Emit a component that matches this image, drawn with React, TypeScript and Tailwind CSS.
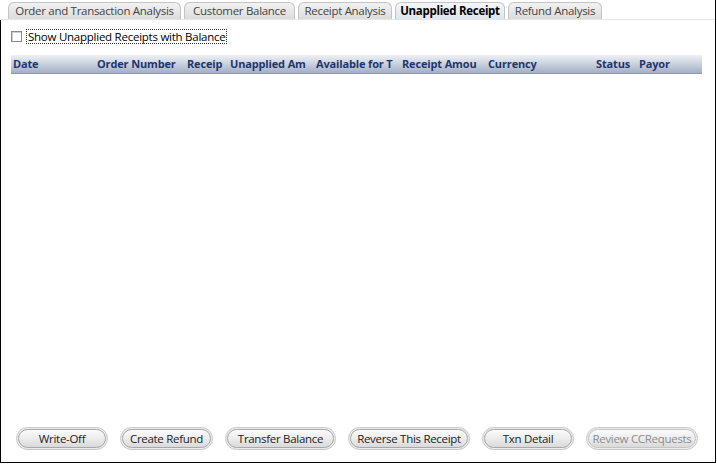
import React from "react";

const tabs = [
  { label: "Order and Transaction Analysis", w: 173, active: false },
  { label: "Customer Balance", w: 111, active: false },
  { label: "Receipt Analysis", w: 94, active: false },
  { label: "Unapplied Receipt", w: 110, active: true },
  { label: "Refund Analysis", w: 94, active: false },
];

const cols = [
  { label: "Date", w: 84 },
  { label: "Order Number", w: 90 },
  { label: "Receip", w: 43 },
  { label: "Unapplied Am", w: 86 },
  { label: "Available for T", w: 86 },
  { label: "Receipt Amou", w: 86 },
  { label: "Currency", w: 108 },
  { label: "Status", w: 43 },
  { label: "Payor", w: 50 },
];

const buttons = [
  { label: "Write-Off", w: 92, disabled: false },
  { label: "Create Refund", w: 93, disabled: false },
  { label: "Transfer Balance", w: 111, disabled: false },
  { label: "Reverse This Receipt", w: 122, disabled: false },
  { label: "Txn Detail", w: 92, disabled: false },
  { label: "Review CCRequests", w: 112, disabled: true },
];

export default function App() {
  return (
    <div
      className="w-[717px] h-[464px] bg-white"
      style={{ fontFamily: "'Open Sans', 'DejaVu Sans', sans-serif" }}
    >
      <div className="w-[716px] h-[463px] border-r border-b border-black flex flex-col">
        <div className="h-[20px] flex items-end pl-[8px] gap-[3px] border-b border-[#e6e6e6]">
          {tabs.map((t) => (
            <div
              key={t.label}
              style={{ width: t.w }}
              className={
                "h-[17px] rounded-t-[6px] border border-b-0 border-[#c4c4c4] flex items-center justify-center text-[11.5px] leading-none tracking-[-0.3px] " +
                (t.active
                  ? "bg-gradient-to-b from-[#f4f7fa] to-[#dde5ee] font-bold text-black"
                  : "bg-gradient-to-b from-[#f2f2f2] to-[#dcdcdc] text-[#444]")
              }
            >
              {t.label}
            </div>
          ))}
        </div>
        <div className="flex-1 border-l border-black flex flex-col">
          <div className="flex items-center mt-[10px] ml-[10px] h-[12px]">
            <div className="w-[11px] h-[11px] border border-[#8a8a8a] bg-white shadow-[inset_1px_1px_0_#d0d0d0]" />
            <span className="ml-[5px] text-[11.5px] leading-[13px] text-black outline-1 outline-dotted outline-[#333] tracking-[-0.25px] px-[1px]">
              Show Unapplied Receipts with Balance
            </span>
          </div>
          <div className="mt-[13px] ml-[10px] w-[691px] h-[19px] flex items-stretch bg-gradient-to-b from-[#eef1f5] via-[#c9d1de] to-[#a3afc3] border-b border-[#8d9ab0]">
            {cols.map((c) => (
              <div
                key={c.label}
                style={{ width: c.w }}
                className="pl-[2px] text-[11px] font-bold text-[#1d3670] whitespace-nowrap overflow-hidden leading-[17px] tracking-[-0.15px]"
              >
                {c.label}
              </div>
            ))}
          </div>
          <div className="flex-1" />
          <div className="flex items-center gap-[12px] ml-[15px] mb-[12px]">
            {buttons.map((b) => (
              <div
                key={b.label}
                style={{ width: b.w }}
                className="h-[23px] rounded-full border border-[#c9c9c9] p-[1px] bg-[#ececec]"
              >
                <div
                  className={
                    "h-full rounded-full border border-[#a8a8a8] bg-gradient-to-b from-[#fbfbfb] via-[#ececec] to-[#dadada] flex items-center justify-center text-[11.5px] leading-none tracking-[-0.3px] " +
                    (b.disabled ? "text-[#8c8c8c] border-[#c4c4c4]" : "text-[#222]")
                  }
                >
                  {b.label}
                </div>
              </div>
            ))}
          </div>
        </div>
      </div>
    </div>
  );
}
